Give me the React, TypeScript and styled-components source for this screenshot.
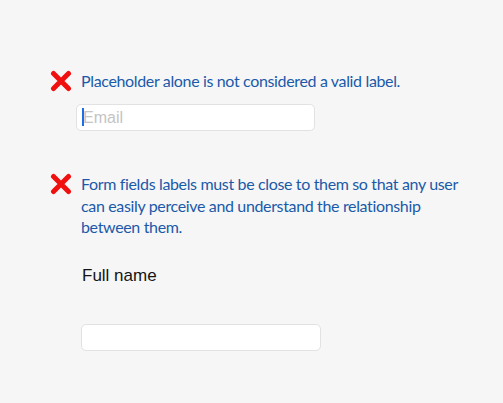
import React from "react";
import styled, { createGlobalStyle } from "styled-components";

const GlobalStyle = createGlobalStyle`
  html, body {
    margin: 0;
    padding: 0;
    background: #f6f6f6;
  }
  body {
    font-family: Lato, "Noto Sans", sans-serif;
  }
`;

const COLORS = {
  blue: "#1b5aa9",
  red: "#f01010",
  border: "#e2e2e2",
};

const Page = styled.div`
  width: 503px;
  height: 403px;
  box-sizing: border-box;
  padding: 70px 0 0 50px;
  background: #f6f6f6;
`;

const Example = styled.section<{ $gap: number }>`
  display: flex;
  flex-direction: column;
  margin-bottom: ${({ $gap }) => $gap}px;
`;

const Message = styled.div`
  display: flex;
  align-items: flex-start;
  gap: 9px;
`;

const MessageText = styled.p`
  margin: 0;
  max-width: 395px;
  font-size: 16px;
  line-height: 21.5px;
  letter-spacing: -0.35px;
  color: ${COLORS.blue};
`;

const Field = styled.div<{ $indent: number; $top: number }>`
  margin: ${({ $top }) => $top}px 0 0 ${({ $indent }) => $indent}px;
  display: flex;
  flex-direction: column;
`;

const Label = styled.label`
  font-family: "Liberation Sans", Arial, sans-serif;
  font-size: 17px;
  color: #141414;
  margin: 0 0 38px 1px;
`;

const Input = styled.input<{ $width: number }>`
  box-sizing: border-box;
  width: ${({ $width }) => $width}px;
  height: 27px;
  border: 1px solid ${COLORS.border};
  border-radius: 5px;
  background: #fff;
  padding: 0 6px;
  font-family: "Liberation Sans", Arial, sans-serif;
  font-size: 16px;
  color: #222;
  outline: none;
  caret-color: #1a6ee8;

  &::placeholder {
    color: #c4c4c4;
  }
`;

const Caret = styled.span`
  position: absolute;
  left: 6px;
  top: 4px;
  width: 2px;
  height: 18px;
  background: #1a6ee8;
`;

const InputWrap = styled.div`
  position: relative;
  width: fit-content;
`;

const CrossIcon = () => (
  <svg width="22" height="22" viewBox="0 0 22 22" style={{ flexShrink: 0 }}>
    <path
      d="M3.5 3.5 L18.5 18.5 M18.5 3.5 L3.5 18.5"
      stroke={COLORS.red}
      strokeWidth="5"
      strokeLinecap="round"
    />
  </svg>
);

const App = () => (
  <>
    <GlobalStyle />
    <Page>
      <Example $gap={42}>
        <Message>
          <CrossIcon />
          <MessageText>Placeholder alone is not considered a valid label.</MessageText>
        </Message>
        <Field $indent={26} $top={12}>
          <InputWrap>
            <Input $width={239} type="email" placeholder="Email" />
            <Caret />
          </InputWrap>
        </Field>
      </Example>
      <Example $gap={0}>
        <Message>
          <CrossIcon />
          <MessageText>
            Form fields labels must be close to them so that any user can easily
            perceive and understand the relationship between them.
          </MessageText>
        </Message>
        <Field $indent={31} $top={28}>
          <Label htmlFor="fullname">Full name</Label>
          <Input $width={240} id="fullname" type="text" />
        </Field>
      </Example>
    </Page>
  </>
);

export default App;
